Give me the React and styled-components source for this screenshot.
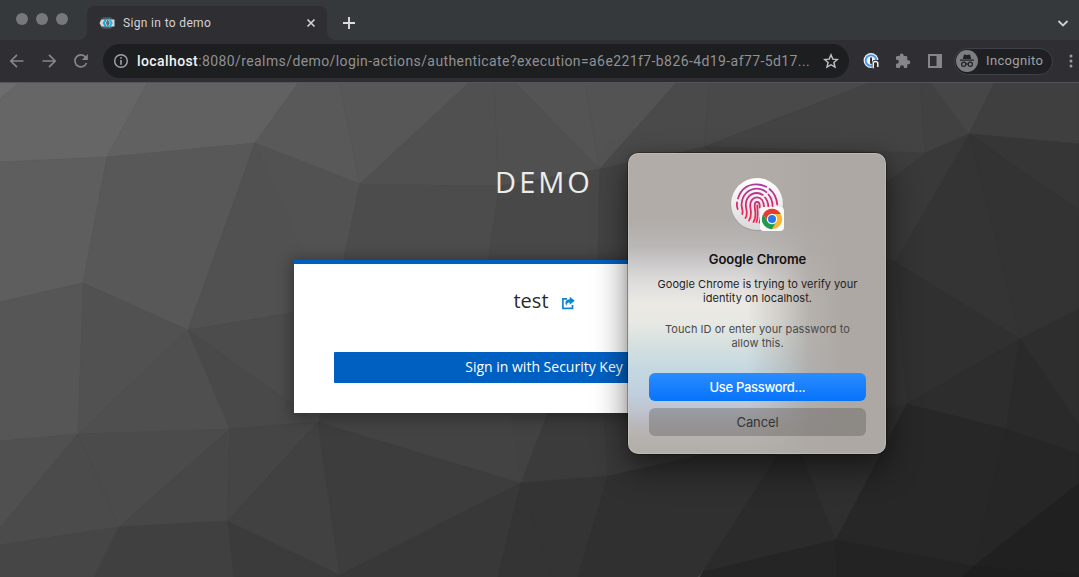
import React from 'react';
import styled, { createGlobalStyle } from 'styled-components';

const GlobalStyle = createGlobalStyle`
  * { box-sizing: border-box; }
  body { margin: 0; overflow: hidden; background: #333; }
  button { border: 0; padding: 0; margin: 0; font: inherit; }
`;

const ui = `Inter, Roboto, "Liberation Sans", sans-serif`;
const chromeUi = `Roboto, "Liberation Sans", sans-serif`;

const Window = styled.div`
  position: relative;
  display: flex;
  flex-direction: column;
  width: 1079px;
  height: 577px;
  overflow: hidden;
`;

const TabStrip = styled.header`
  display: flex;
  height: 40px;
  flex: none;
  background: #35393b;
  padding: 6px 10px 0 16px;
`;

const Lights = styled.div`
  display: flex;
  gap: 8px;
  width: 71px;
  padding-top: 7px;
`;

const Light = styled.i`
  width: 12px;
  height: 12px;
  border-radius: 50%;
  background: #77787a;
`;

const Tab = styled.div`
  position: relative;
  display: flex;
  align-items: center;
  width: 240px;
  height: 34px;
  padding: 0 10px 0 12px;
  border-radius: 8px 8px 0 0;
  background: #2f2e33;
  color: #d3d3d5;
  font: 400 12px/16px ${chromeUi};
  letter-spacing: 0.34px;
  &::before, &::after {
    content: '';
    position: absolute;
    bottom: 0;
    width: 8px;
    height: 8px;
  }
  &::before { left: -8px; background: radial-gradient(circle at 0 0, transparent 7.5px, #2f2e33 8px); }
  &::after { right: -8px; background: radial-gradient(circle at 100% 0, transparent 7.5px, #2f2e33 8px); }
`;

const TabTitle = styled.span`
  flex: 1;
  margin-left: 8px;
`;

const NewTab = styled.div`
  display: flex;
  flex: 1;
  align-items: center;
  padding-left: 15px;
`;

const StripEnd = styled.div`
  display: flex;
  align-items: center;
`;

const Toolbar = styled.nav`
  display: flex;
  align-items: center;
  height: 43px;
  flex: none;
  background: #2f2e33;
  border-bottom: 1px solid #55555a;
  padding-left: 8px;
  > * { flex: none; }
`;

const NavIcons = styled.div`
  display: flex;
  gap: 14px;
  width: 95px;
`;

const Address = styled.div`
  display: flex;
  align-items: center;
  width: 746px;
  height: 34px;
  padding: 0 10px;
  border-radius: 17px;
  background: #1d1e20;
  color: #909194;
  font: 400 14px/20px ${chromeUi};
  letter-spacing: 0.405px;
`;

const Url = styled.span`
  flex: 1;
  margin-left: 8px;
  white-space: nowrap;
  b { font-weight: 500; color: #f2f2f3; }
`;

const Extensions = styled.div`
  display: flex;
  align-items: center;
  gap: 14px;
  margin-left: 13px;
`;

const Profile = styled.div`
  display: flex;
  align-items: center;
  gap: 8px;
  width: 99px;
  height: 27px;
  margin: 0 10px 0 10px;
  padding-left: 1px;
  border: 1px solid #404146;
  border-radius: 14px;
  background: #1f2023;
  color: #9fa1a5;
  font: 400 13px/18px ${chromeUi};
  letter-spacing: 0.35px;
`;

const Page = styled.main`
  position: relative;
  display: flex;
  flex: 1;
  flex-direction: column;
  align-items: center;
  background: #444;
  font-family: "Open Sans", "Noto Sans", sans-serif;
`;

const Backdrop = styled.svg`
  position: absolute;
  inset: 0;
  display: block;
`;

const Realm = styled.h1`
  position: relative;
  margin: 78px 0 0 9px;
  height: 41px;
  color: #ececec;
  font-size: 29px;
  font-weight: 400;
  line-height: 41px;
  letter-spacing: 3px;
`;

const Card = styled.section`
  position: relative;
  display: flex;
  flex-direction: column;
  width: 500px;
  height: 153px;
  margin: 58px 0 0 9px;
  padding: 22px 40px 0;
  border-top: 4px solid #0060c2;
  background: #fff;
  box-shadow: 0 2px 14px 2px rgba(3, 3, 3, 0.36);
`;

const UserRow = styled.div`
  display: flex;
  align-items: center;
  justify-content: center;
  gap: 12px;
  height: 30px;
  color: #2b2b2c;
  font-size: 20px;
  line-height: 30px;
  svg { margin-top: 4px; }
`;

const KeyButton = styled.button`
  height: 31px;
  margin-top: 36px;
  border-radius: 1px;
  background: #0060c2;
  color: #fff;
  font-size: 14px;
  line-height: 29px;
  padding-bottom: 2px;
`;

const Dialog = styled.aside`
  position: absolute;
  left: 628px;
  top: 153px;
  display: flex;
  flex-direction: column;
  align-items: center;
  width: 258px;
  height: 301px;
  padding: 19px 20px 0 21px;
  border-radius: 10px;
  color: #1a1a1a;
  font-family: ${ui};
  text-align: center;
  background:
    linear-gradient(90deg, rgba(173,168,164,0) 46%, rgba(173,168,164,.45) 60%, rgba(173,168,164,.85) 70%, #ada8a4 83%),
    linear-gradient(180deg, #b1aca8 0, #b1aca8 22%, #b9b7b6 31%, #cccbcb 37%, #dedddc 43%, #ebe9e4 50%, #e8e9e4 56%, #d7e1df 63%, #c4d8e2 72%, #c0cfdf 80%, #bfc3cd 86%, #b9b8bb 90%, #b5b1ad 95%, #b2ada9 100%);
  box-shadow: 0 0 0 0.5px rgba(0,0,0,.55), inset 0 0 0 1px rgba(215,210,206,.38), 0 14px 32px 2px rgba(0,0,0,.46), 0 0 12px rgba(0,0,0,.12);
`;

const DialogIcon = styled.div`
  height: 60px;
  margin-right: 1px;
`;

const DialogTitle = styled.h2`
  margin: 19px 0 0;
  font-size: 13px;
  font-weight: 600;
  line-height: 16px;
  letter-spacing: -0.02px;
  color: #111;
`;

const Message = styled.p`
  margin: ${p => p.$top}px 0 0;
  color: ${p => (p.$muted ? '#484a4c' : '#1e1e1e')};
  font-size: 11px;
  line-height: 14px;
  letter-spacing: 0.045px;
  white-space: nowrap;
`;

const Action = styled.button`
  flex: none;
  width: 217px;
  height: 28px;
  margin-top: ${p => p.$top}px;
  border-radius: 6px;
  background: ${p => (p.$primary ? 'linear-gradient(#2b8cff, #0673fb)' : 'rgba(75,70,67,.32)')};
  color: ${p => (p.$primary ? '#fff' : '#363534')};
  font-size: 13px;
  font-weight: ${p => (p.$primary ? 500 : 400)};
  line-height: 27px;
  letter-spacing: ${p => (p.$primary ? '-0.3px' : '-0.12px')};
`;

/* Facets of the dark page backdrop: shade, then corner points in window coordinates. */
const facets = [
  ['#6d6d6d', '0,82 20,82 0,99'],
  ['#666666', '20,82 148,82 107,157 0,162 0,99'],
  ['#616161', '148,82 299,82 255,143 107,157'],
  ['#595959', '299,82 339,82 360,184 255,143'],
  ['#575757', '339,82 470,82 360,184'],
  ['#505050', '470,82 494,82 499,186 360,184'],
  ['#505050', '494,82 515,82 600,169 499,186'],
  ['#545454', '515,82 585,82 600,169'],
  ['#535353', '585,82 677,82 600,169'],
  ['#4a4a4a', '677,82 710,82 704,147 600,169'],
  ['#494949', '710,82 872,82 704,147'],
  ['#434343', '872,82 920,82 925,153 704,147'],
  ['#414141', '920,82 930,82 969,134 925,153'],
  ['#464646', '930,82 995,82 969,134'],
  ['#3f3f3f', '995,82 1079,82 1079,144 969,134'],
  ['#363636', '969,134 1079,144 1079,210'],
  ['#333333', '969,134 1079,210 1079,309 1020,339'],
  ['#343434', '969,134 1020,339 895,262'],
  ['#393939', '925,153 969,134 895,262 820,232'],
  ['#3e3e3e', '704,147 925,153 820,232'],
  ['#5e5e5e', '0,162 107,157 83,283 0,302'],
  ['#585858', '107,157 255,143 188,330 83,283'],
  ['#515151', '255,143 308,260 340,305 188,330'],
  ['#525252', '255,143 360,184 343,263 308,263'],
  ['#4c4c4c', '360,184 499,186 488,263 343,263'],
  ['#484848', '499,186 600,169 598,263 488,263'],
  ['#434343', '600,169 704,147 704,263 598,263'],
  ['#565656', '0,302 83,283 78,434 0,441'],
  ['#515151', '83,283 188,330 78,434'],
  ['#4f4f4f', '188,330 230,429 78,434'],
  ['#494949', '188,330 318,422 230,429'],
  ['#4c4c4c', '188,330 340,305 318,422'],
  ['#505050', '0,441 78,434 0,528'],
  ['#4b4b4b', '0,528 78,434 119,527 0,545'],
  ['#4b4b4b', '78,434 230,429 119,527'],
  ['#474747', '230,429 228,521 119,527'],
  ['#454545', '230,429 318,422 228,521'],
  ['#464646', '0,545 119,527 94,577 0,577'],
  ['#404040', '119,527 228,521 234,577 94,577'],
  ['#3b3b3b', '228,521 340,575 340,577 234,577'],
  ['#414141', '228,521 318,422 340,575'],
  ['#3d3d3d', '318,422 521,483 340,575'],
  ['#434343', '318,422 330,410 510,410 521,483'],
  ['#424242', '510,410 549,410 521,483'],
  ['#3b3b3b', '549,410 604,410 608,476 521,483'],
  ['#393939', '604,410 700,410 720,451 608,476'],
  ['#383838', '521,483 498,577 336,577 340,575'],
  ['#343434', '521,483 553,577 498,577'],
  ['#343434', '521,483 608,476 578,577 553,577'],
  ['#303030', '608,476 720,451 778,455 703,572 697,577 578,577'],
  ['#2b2b2b', '778,455 802,455 836,540 703,572'],
  ['#2f2f2f', '802,455 775,404 907,404 836,540'],
  ['#333333', '820,232 895,262 907,404 780,435'],
  ['#303030', '895,262 1020,339 907,404'],
  ['#2d2d2d', '907,404 1020,339 1006,429'],
  ['#2e2e2e', '1020,339 1079,309 1079,425'],
  ['#2a2a2a', '1020,339 1079,425 1079,454 1006,429'],
  ['#272727', '907,404 1006,429 974,566 836,540'],
  ['#262626', '1006,429 1079,454 1079,483 974,566'],
  ['#202020', '1079,483 1079,573 974,566'],
  ['#252525', '703,572 836,540 837,577 700,577'],
  ['#232323', '836,540 974,566 962,577 837,577'],
  ['#1e1e1e', '974,566 1079,573 1079,577 962,577'],
];

const Icon = ({ size = 20, children, ...rest }) => (
  <svg width={size} height={size} viewBox={`0 0 ${size} ${size}`} fill="none" {...rest}>{children}</svg>
);

const Favicon = () => (
  <Icon size={16}>
    <path d="M4 2h8l2 2.500v7L12 14H4L1.500 11.500V4.500z" fill="#4b4c4e" />
    <path d="M2.500 4.500h13v7h-13L0.500 8z" fill="#d5d7d9" />
    <path d="M6.300 3.500 3.600 8l2.700 4.500h2L5.900 8l2.400-4.500z" fill="#12a5d8" />
    <path d="M9.200 3.500h1.900L13.700 8l-2.600 4.500H9.200L11.600 8z" fill="#12b8ea" />
    <path d="M8.300 5h.9l1.500 3-1.500 3h-.9L6.800 8z" fill="#5b6e76" />
  </Icon>
);

const TouchId = () => (
  <svg width="64" height="64" viewBox="0 0 64 64" fill="none">
    <defs>
      <linearGradient id="disc" x1="0" y1="6" x2="0" y2="58" gradientUnits="userSpaceOnUse">
        <stop stopColor="#fff" /><stop offset="1" stopColor="#dadada" />
      </linearGradient>
      <linearGradient id="ridge" x1="0" y1="12" x2="0" y2="51" gradientUnits="userSpaceOnUse">
        <stop stopColor="#a93aa4" /><stop offset=".5" stopColor="#d52a72" /><stop offset="1" stopColor="#f52a50" />
      </linearGradient>
    </defs>
    <circle cx="32" cy="32.600" r="26.300" fill="#777" opacity=".35" />
    <circle cx="32" cy="32" r="26" fill="url(#disc)" />
    <g stroke="url(#ridge)" strokeWidth="1.800" strokeLinecap="round">
      <path d="M13 26.500C16 17 23 12.300 31 12.300c4 0 7 .9 10.200 2.500" />
      <path d="M44.500 17c4.600 3.700 7.200 9 7.700 15.500" />
      <path d="M12 30.500c-.4 2.500 0 4.500.7 6.500" />
      <path d="M17.200 42c1.500-3.500-.9-5.200-.6-10C17.200 23 23.500 16.700 32 16.700c3.600 0 6.800 1.300 9.300 3.400" />
      <path d="M43.500 22.500c2.700 3.200 4 7 4.100 11.500" />
      <path d="M20.500 46c3-4.800.3-8.500.3-13 0-7 4.800-12 11-12 2.500 0 4.300.7 6 1.900" />
      <path d="M40 25.500c2.200 2.400 3.200 5.300 3.300 9" />
      <path d="M24 48.500c3.700-5 1.300-10.500 1.200-15 0-4.800 2.900-8.200 6.700-8.200 4.200 0 7 3.900 7.100 9.700" />
      <path d="M28.500 50c3.700-6 1.200-11.500 1.200-16.500 0-4.800 4.800-4.800 5 0v2" />
      <path d="M32.300 33.500c.1 6 1.300 10.500-.8 16.500M34.500 50.500c.7-1.300 1-2.900 1-4.500" />
    </g>
    <rect x="35" y="35" width="24" height="24" rx="4" fill="#fafafa" />
    <g transform="translate(47 47)">
      <path d="M-8.830-5.100A10.200 10.200 0 0 1 8.830-5.100H0Z" fill="#e33b2e" />
      <path d="M8.830-5.100A10.200 10.200 0 0 1 0 10.200L4.420 2.550 0-5.100Z" fill="#fbb62f" />
      <path d="M0 10.200A10.200 10.200 0 0 1-8.830-5.100L-4.420 2.550H4.420Z" fill="#219a4b" />
      <path d="M-8.830-5.100-4.420 2.550 0-5.100Z" fill="#e33b2e" />
      <circle r="5.200" fill="#fff" /><circle r="4" fill="#2878e8" />
    </g>
  </svg>
);

export default function App() {
  return (
    <Window>
      <GlobalStyle />
      <TabStrip>
        <Lights><Light /><Light /><Light /></Lights>
        <Tab>
          <Favicon />
          <TabTitle>Sign in to demo</TabTitle>
          <Icon size={12}><path d="m2.500 2.500 7 7m0-7-7 7" stroke="#d3d3d5" strokeWidth="1.600" /></Icon>
        </Tab>
        <NewTab><Icon size={14}><path d="M7 1v12M1 7h12" stroke="#dcdddd" strokeWidth="1.900" /></Icon></NewTab>
        <StripEnd><Icon size={12}><path d="m1.500 4 4.500 4.500L10.500 4" stroke="#cfd0d1" strokeWidth="1.800" /></Icon></StripEnd>
      </TabStrip>

      <Toolbar>
        <NavIcons>
          <Icon size={18}><path d="M15.500 9H3m6-6.200L2.800 9 9 15.200" stroke="#85868a" strokeWidth="1.700" /></Icon>
          <Icon size={18}><path d="M2.500 9H15M9 2.800 15.200 9 9 15.200" stroke="#85868a" strokeWidth="1.700" /></Icon>
          <Icon size={18}><path d="M14.500 11A6 6 0 1 1 13.600 5.100L15 6.600" stroke="#85868a" strokeWidth="1.700" /><path d="M15.800 2v6H9.800z" fill="#85868a" /></Icon>
        </NavIcons>
        <Address>
          <Icon size={16}><circle cx="8" cy="8" r="6.300" stroke="#a3a5a9" strokeWidth="1.400" /><path d="M8 7v4.700M8 4.200v1.600" stroke="#a3a5a9" strokeWidth="1.600" /></Icon>
          <Url><b>localhost</b>:8080/realms/demo/login-actions/authenticate?execution=a6e221f7-b826-4d19-af77-5d17...</Url>
          <Icon size={16}><path d="m8 1.800 1.800 4.300 4.600.4-3.500 3 1.100 4.600L8 11.700l-4 2.400 1.100-4.600-3.500-3 4.600-.4z" stroke="#c2c3c5" strokeWidth="1.400" /></Icon>
        </Address>
        <Extensions>
          <Icon size={18}>
            <circle cx="9" cy="8.500" r="7.400" fill="#f5f6f7" />
            <circle cx="9" cy="8.500" r="5.300" stroke="#4a9bf0" strokeWidth="2" />
            <path d="M8.100 5.500h1.900v6.200H8.100z" fill="#26292e" />
            <path d="M9.800 10.500 11.500 8H17v9H9.800z" fill="#2f2e33" />
            <path d="M11.200 16.300V11.500c0-2.800 4.600-2.800 4.600 0v3.500" stroke="#f0f0f0" strokeWidth="1.500" />
          </Icon>
          <Icon size={18}><path d="M14.300 8.300h-1V5.300c0-.7-.6-1.300-1.300-1.300H9.700V3.500a2 2 0 0 0-4 0V4H3.300C2.600 4 2 4.600 2 5.300v2.500h.8a2 2 0 0 1 0 4H2v2.900c0 .7.600 1.300 1.300 1.300H6v-.8a2 2 0 0 1 4 0v.8h2c.7 0 1.300-.6 1.300-1.300v-2.400h1a2 2 0 0 0 0-4z" fill="#85868a" /></Icon>
          <Icon size={18}><path d="M3 3h12v12H3z" stroke="#85868a" strokeWidth="2" /><path d="M10.500 3H15v12h-4.500z" fill="#85868a" /></Icon>
        </Extensions>
        <Profile>
          <Icon size={22}>
            <circle cx="11" cy="11" r="11" fill="#7d7e80" />
            <path d="M8 4.500 11 5l3-.5L15.200 9H6.800zM4 9.500h14v1.300H4z" fill="#202124" />
            <g stroke="#202124" strokeWidth="1.200"><circle cx="7.700" cy="14.200" r="2.100" /><circle cx="14.300" cy="14.200" r="2.100" /><path d="M9.800 14h2.400" /></g>
          </Icon>
          Incognito
        </Profile>
        <Icon size={16}><g fill="#9a9b9e"><circle cx="8" cy="3" r="1.500" /><circle cx="8" cy="8" r="1.500" /><circle cx="8" cy="13" r="1.500" /></g></Icon>
      </Toolbar>

      <Page>
        <Backdrop width="1079" height="494" viewBox="0 83 1079 494">
          {facets.map(([shade, points]) => (
            <polygon key={points} points={points} fill={shade} stroke={shade} strokeWidth="0.500" />
          ))}
        </Backdrop>
        <Realm>DEMO</Realm>
        <Card>
          <UserRow>
            <span>test</span>
            <Icon size={14}>
              <path d="M6 2.800H1.900v9.500h9.600V9" stroke="#0f87cf" strokeWidth="1.700" />
              <path d="M8.700.8 13.800 4.800 8.700 8.800V6.400C6.300 6.400 5.400 7.800 5.700 10 2.900 6.600 5 3.200 8.700 3.200z" fill="#0f87cf" />
            </Icon>
          </UserRow>
          <KeyButton>Sign in with Security Key</KeyButton>
        </Card>
      </Page>

      <Dialog>
        <DialogIcon><TouchId /></DialogIcon>
        <DialogTitle>Google Chrome</DialogTitle>
        <Message $top={10}>Google Chrome is trying to verify your<br />identity on localhost.</Message>
        <Message $top={17} $muted>Touch ID or enter your password to<br />allow this.</Message>
        <Action $primary $top={23}>Use Password...</Action>
        <Action $top={7}>Cancel</Action>
      </Dialog>
    </Window>
  );
}
